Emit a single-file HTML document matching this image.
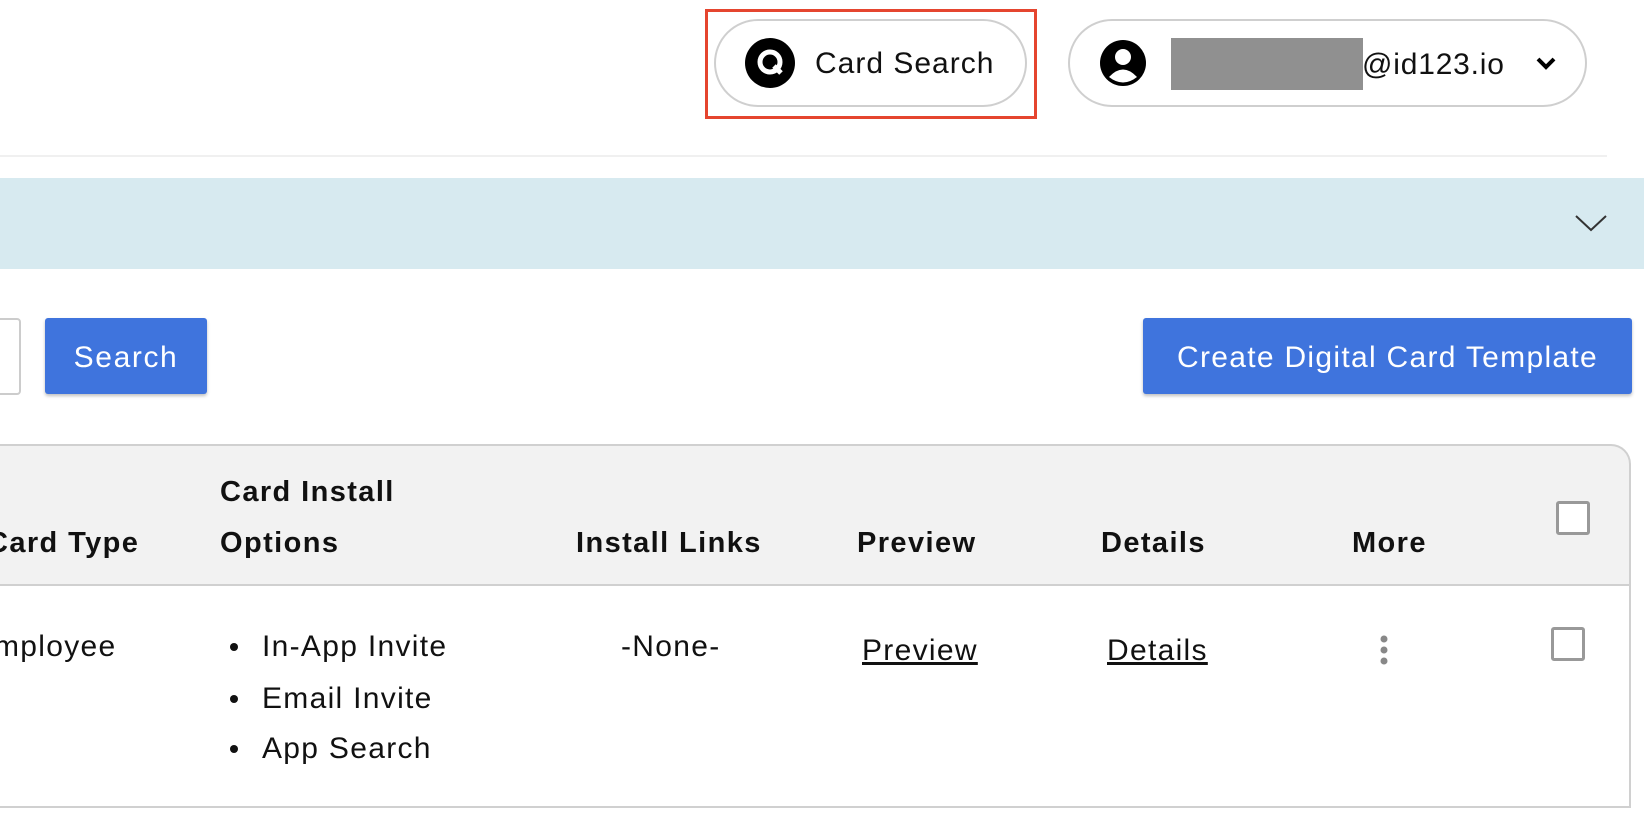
<!DOCTYPE html>
<html><head><meta charset="utf-8"><style>
*{margin:0;padding:0;box-sizing:border-box}
body{width:1644px;height:818px;overflow:hidden;background:#fff;font-family:"Liberation Sans",sans-serif;color:#111;position:relative}
.a{position:absolute;white-space:nowrap}
.pill{position:absolute;border:2px solid #cfcfcf;border-radius:50px;background:#fff}
.btn{position:absolute;background:#3f74dd;color:#fff;font-size:30px;letter-spacing:1.3px;border-radius:3px;box-shadow:0 2px 3px rgba(0,0,0,.25);display:flex;align-items:center;justify-content:center;padding-top:4px}
.h{font-weight:bold;font-size:29px;letter-spacing:1.4px}
.t{font-size:30px;letter-spacing:1.3px}
.cb{position:absolute;width:34px;height:34px;border:3px solid #999;border-radius:3px;background:#fff}
.bl{position:absolute;width:8px;height:8px;border-radius:50%;background:#111}
</style></head><body>
<div class="a" style="left:705px;top:9px;width:332px;height:110px;border:3px solid #e5452f"></div>
<div class="pill" style="left:714px;top:19px;width:313px;height:88px"></div>
<svg class="a" style="left:745px;top:38px" width="50" height="50" viewBox="0 0 50 50"><circle cx="25" cy="25" r="25" fill="#000"/><circle cx="25" cy="24" r="10" fill="none" stroke="#fff" stroke-width="5"/><path d="M29 28 L36 35" stroke="#fff" stroke-width="5"/></svg>
<div class="a" style="left:815px;top:47px;font-size:30px;letter-spacing:1px">Card Search</div>
<div class="pill" style="left:1068px;top:19px;width:519px;height:88px"></div>
<svg class="a" style="left:1100px;top:40px" width="46" height="46" viewBox="0 0 46 46"><circle cx="23" cy="23" r="23" fill="#000"/><circle cx="23" cy="17" r="8" fill="#fff"/><path d="M9 37 Q23 22 37 37 Q23 48 9 37Z" fill="#fff"/></svg>
<div class="a" style="left:1171px;top:38px;width:192px;height:52px;background:#909090"></div>
<div class="a" style="left:1362px;top:48px;font-size:30px;letter-spacing:0.8px">@id123.io</div>
<svg class="a" style="left:1535px;top:56px" width="22" height="16" viewBox="0 0 22 16"><path d="M3 3 L11 11 L19 3" fill="none" stroke="#000" stroke-width="4"/></svg>
<div class="a" style="left:0;top:155px;width:1607px;height:2px;background:#f0f0f0"></div>
<div class="a" style="left:0;top:178px;width:1644px;height:91px;background:#d7eaf0"></div>
<svg class="a" style="left:1574px;top:213px" width="34" height="20" viewBox="0 0 34 20"><path d="M2 3 L17 17 L32 3" fill="none" stroke="#333" stroke-width="2"/></svg>
<div class="a" style="left:-10px;top:318px;width:31px;height:77px;border:2px solid #ccc;border-radius:4px"></div>
<div class="btn" style="left:45px;top:318px;width:162px;height:76px;letter-spacing:1.6px">Search</div>
<div class="btn" style="left:1143px;top:318px;width:489px;height:76px">Create Digital Card Template</div>
<div class="a" style="left:-20px;top:444px;width:1651px;height:142px;background:#f2f2f2;border:2px solid #d0d0d0;border-top-right-radius:20px;border-left:none"></div>
<div class="a" style="left:-20px;top:584px;width:1651px;height:224px;border-right:2px solid #d0d0d0;border-bottom:2px solid #d0d0d0"></div>
<div class="a h" style="left:-13px;top:527px">Card Type</div>
<div class="a h" style="left:220px;top:476px">Card Install</div>
<div class="a h" style="left:220px;top:527px">Options</div>
<div class="a h" style="left:576px;top:527px">Install Links</div>
<div class="a h" style="left:857px;top:527px">Preview</div>
<div class="a h" style="left:1101px;top:527px">Details</div>
<div class="a h" style="left:1352px;top:527px">More</div>
<div class="cb" style="left:1556px;top:501px"></div>
<div class="a t" style="left:-6px;top:630px">mployee</div>
<div class="bl" style="left:230px;top:643px"></div>
<div class="bl" style="left:230px;top:695px"></div>
<div class="bl" style="left:230px;top:745px"></div>
<div class="a t" style="left:262px;top:630px">In-App Invite</div>
<div class="a t" style="left:262px;top:682px">Email Invite</div>
<div class="a t" style="left:262px;top:732px">App Search</div>
<div class="a t" style="left:621px;top:630px">-None-</div>
<div class="a t" style="left:862px;top:634px;text-decoration:underline">Preview</div>
<div class="a t" style="left:1107px;top:634px;text-decoration:underline">Details</div>
<svg class="a" style="left:1379px;top:635px" width="10" height="30" viewBox="0 0 10 30"><circle cx="5" cy="4" r="3.5" fill="#888"/><circle cx="5" cy="15" r="3.5" fill="#888"/><circle cx="5" cy="26" r="3.5" fill="#888"/></svg>
<div class="cb" style="left:1551px;top:627px"></div>
</body></html>
